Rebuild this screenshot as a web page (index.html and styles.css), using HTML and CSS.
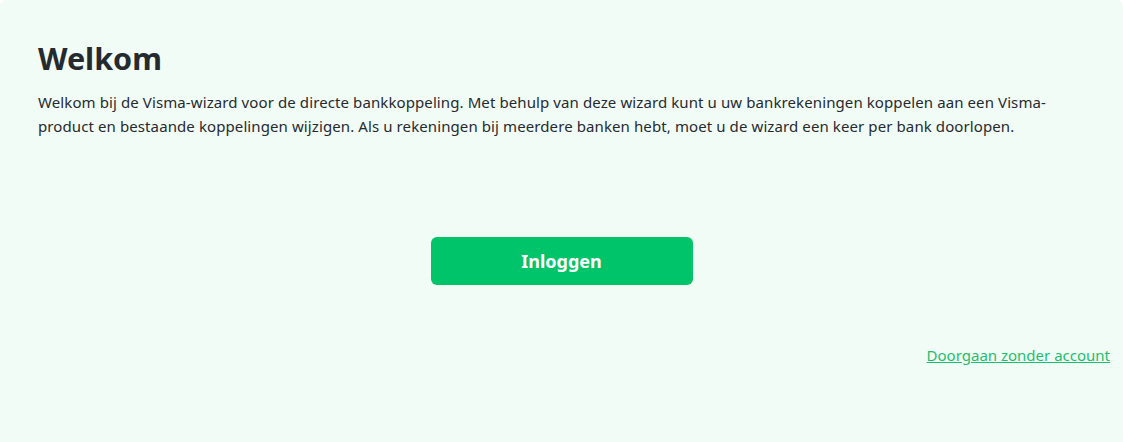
FILE: index.html
```html
<!DOCTYPE html>
<html lang="nl">
<head>
<meta charset="utf-8">
<title>Welkom</title>
<link rel="stylesheet" href="styles.css">
</head>
<body>
<main class="panel">
  <section class="intro">
    <h1 class="title">Welkom</h1>
    <p class="lead">Welkom bij de Visma-wizard voor de directe bankkoppeling. Met behulp van deze wizard kunt u uw bankrekeningen koppelen aan een Visma-product en bestaande koppelingen wijzigen. Als u rekeningen bij meerdere banken hebt, moet u de wizard een keer per bank doorlopen.</p>
  </section>
  <div class="actions">
    <button class="login" type="button">Inloggen</button>
  </div>
  <div class="skip">
    <a class="skip-link" href="#">Doorgaan zonder account</a>
  </div>
</main>
</body>
</html>
```

FILE: styles.css
```css
html, body {
  margin: 0;
  padding: 0;
  background: #ffffff;
  height: 100%;
}
body {
  font-family: "Noto Sans", "Open Sans", sans-serif;
  color: #262a30;
}
.panel {
  background: #f2fcf6;
  border-radius: 6px 6px 0 0;
  min-height: 442px;
  box-sizing: border-box;
  padding: 38px 13px 0 13px;
}
.intro {
  padding-left: 25px;
}
.title {
  margin: 0;
  font-size: 30.5px;
  line-height: 40px;
  font-weight: 700;
  color: #252a2e;
}
.lead {
  margin: 12px 0 0;
  max-width: 1030px;
  font-size: 15px;
  line-height: 24px;
  letter-spacing: 0.1px;
}
.actions {
  display: flex;
  justify-content: center;
  margin-top: 99px;
}
.login {
  width: 262px;
  height: 48px;
  border: none;
  border-radius: 6px;
  background: #00c46a;
  color: #ffffff;
  font-family: inherit;
  font-size: 18px;
  font-weight: 700;
  cursor: pointer;
}
.skip {
  display: flex;
  justify-content: flex-end;
  margin-top: 58px;
}
.skip-link {
  color: #1cbf6e;
  font-size: 15px;
  line-height: 24px;
  text-decoration: underline;
}
```
